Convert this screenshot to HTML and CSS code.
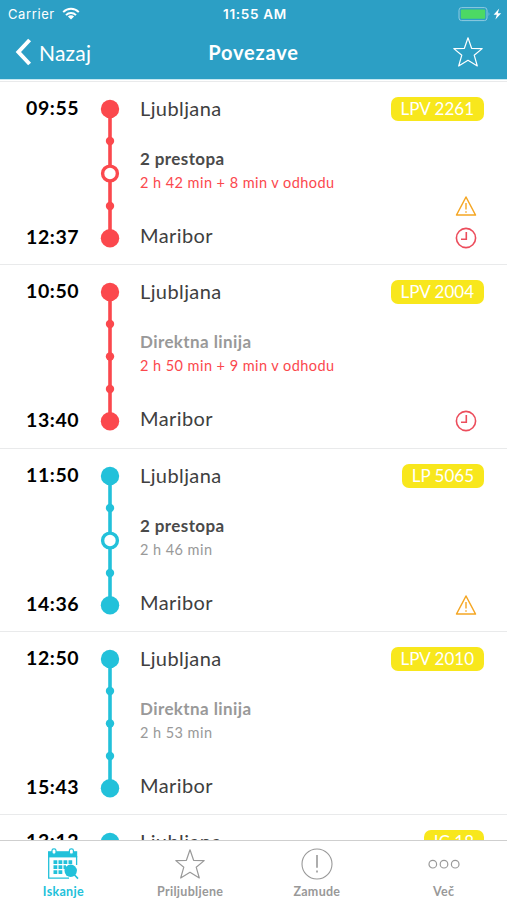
FILE: index.html
```html
<!DOCTYPE html>
<html lang="sl">
<head>
    <meta charset="UTF-8">
    <meta name="viewport" content="width=device-width, initial-scale=1.0">
    <title>Povezave</title>
    <link rel="stylesheet" href="styles.css">
</head>
<body>
    <!-- shared icons -->
    <svg class="sprite">
        <symbol id="star" viewBox="0 0 32 32">
            <path d="M16 1.8 L19.6 12.3 L30.2 12.6 L22.2 19.2 L25.3 30 L16 24.3 L6.7 30 L9.8 19.2 L1.8 12.6 L12.4 12.3 Z" fill="none" stroke="currentColor" stroke-width="1.2" stroke-linejoin="round"/>
        </symbol>
        <symbol id="warning" viewBox="0 0 22 22">
            <path d="M11 2 L20.5 20 H1.5 Z" fill="none" stroke="currentColor" stroke-width="1.5" stroke-linejoin="round"/>
            <path d="M11 8 V14.5 M11 16.2 V17.8" stroke="currentColor" stroke-width="1.4"/>
        </symbol>
        <symbol id="clock" viewBox="0 0 22 22">
            <circle cx="11" cy="11" r="9.6" fill="none" stroke="currentColor" stroke-width="1.6"/>
            <path d="M11.3 5 V12.3 H6" fill="none" stroke="currentColor" stroke-width="1.6"/>
        </symbol>
        <symbol id="track-direct" viewBox="0 0 20 150">
            <path d="M10 10 V139" stroke="currentColor" stroke-width="3.6"/>
            <g fill="currentColor">
                <circle cx="10" cy="10" r="9.2"/>
                <circle cx="10" cy="42" r="4.2"/>
                <circle cx="10" cy="74.5" r="4.2"/>
                <circle cx="10" cy="107" r="4.2"/>
                <circle cx="10" cy="139.3" r="9.2"/>
            </g>
        </symbol>
        <symbol id="track-transfer" viewBox="0 0 20 150">
            <path d="M10 10 V139" stroke="currentColor" stroke-width="3.6"/>
            <g fill="currentColor">
                <circle cx="10" cy="10" r="9.2"/>
                <circle cx="10" cy="42" r="4.2"/>
                <circle cx="10" cy="107" r="4.2"/>
                <circle cx="10" cy="139.3" r="9.2"/>
            </g>
            <circle cx="10" cy="74.5" r="7.4" fill="#fff" stroke="currentColor" stroke-width="3.4"/>
        </symbol>
    </svg>

    <header class="header">
        <div class="status-bar">
            <div class="carrier">
                <span>Carrier</span>
                <svg class="wifi" viewBox="0 0 18 13">
                    <g fill="none" stroke="currentColor" stroke-width="2">
                        <path d="M1.2 5.1 A11 11 0 0 1 16.8 5.1"/>
                        <path d="M4 8.1 A7 7 0 0 1 14 8.1"/>
                    </g>
                    <path d="M9 12.6 L5.9 9.6 A4.4 4.4 0 0 1 12.1 9.6 Z" fill="currentColor"/>
                </svg>
            </div>
            <span class="clock-time">11:55 AM</span>
            <svg class="battery" viewBox="0 0 44 16">
                <rect x="1" y="1.6" width="28" height="13" rx="2.6" fill="none" stroke="#8fcbe0" stroke-width="1"/>
                <rect x="2.8" y="3.4" width="24.4" height="9.4" rx="1" fill="#4cd964"/>
                <path d="M30.6 6 Q32.4 8.1 30.6 10.2 Z" fill="#8fcbe0"/>
                <path d="M41.2 2.6 L35.6 8.8 H38.8 L37.4 13.6 L43.2 7.2 H39.8 Z" fill="#fff"/>
            </svg>
        </div>
        <div class="nav-bar">
            <a class="back">
                <svg class="chevron" viewBox="0 0 17 28"><path d="M14.6 2 L3.4 14 L14.6 26" fill="none" stroke="currentColor" stroke-width="4"/></svg>
                <span>Nazaj</span>
            </a>
            <h1>Povezave</h1>
            <svg class="favorite"><use href="#star"/></svg>
        </div>
    </header>

    <main class="connections">
        <article class="connection delayed">
            <div class="times"><span>09:55</span><span>12:37</span></div>
            <svg class="track"><use href="#track-transfer"/></svg>
            <div class="route">
                <span class="station">Ljubljana</span>
                <strong class="transfers">2 prestopa</strong>
                <span class="duration">2 h 42 min + 8 min v odhodu</span>
                <span class="station">Maribor</span>
            </div>
            <div class="info">
                <span class="train">LPV 2261</span>
                <div class="alerts">
                    <svg class="warning"><use href="#warning"/></svg>
                    <svg class="late"><use href="#clock"/></svg>
                </div>
            </div>
        </article>

        <article class="connection delayed">
            <div class="times"><span>10:50</span><span>13:40</span></div>
            <svg class="track"><use href="#track-direct"/></svg>
            <div class="route">
                <span class="station">Ljubljana</span>
                <strong class="transfers direct">Direktna linija</strong>
                <span class="duration">2 h 50 min + 9 min v odhodu</span>
                <span class="station">Maribor</span>
            </div>
            <div class="info">
                <span class="train">LPV 2004</span>
                <div class="alerts">
                    <svg class="late"><use href="#clock"/></svg>
                </div>
            </div>
        </article>

        <article class="connection">
            <div class="times"><span>11:50</span><span>14:36</span></div>
            <svg class="track"><use href="#track-transfer"/></svg>
            <div class="route">
                <span class="station">Ljubljana</span>
                <strong class="transfers">2 prestopa</strong>
                <span class="duration">2 h 46 min</span>
                <span class="station">Maribor</span>
            </div>
            <div class="info">
                <span class="train">LP 5065</span>
                <div class="alerts">
                    <svg class="warning"><use href="#warning"/></svg>
                </div>
            </div>
        </article>

        <article class="connection">
            <div class="times"><span>12:50</span><span>15:43</span></div>
            <svg class="track"><use href="#track-direct"/></svg>
            <div class="route">
                <span class="station">Ljubljana</span>
                <strong class="transfers direct">Direktna linija</strong>
                <span class="duration">2 h 53 min</span>
                <span class="station">Maribor</span>
            </div>
            <div class="info">
                <span class="train">LPV 2010</span>
            </div>
        </article>

        <article class="connection">
            <div class="times"><span>13:12</span></div>
            <svg class="track"><use href="#track-direct"/></svg>
            <div class="route">
                <span class="station">Ljubljana</span>
            </div>
            <div class="info">
                <span class="train">IC 18</span>
            </div>
        </article>
    </main>

    <nav class="tab-bar">
        <a class="tab active">
            <svg viewBox="0 0 32 32">
                <path d="M1.7 8 V30.2 H22" fill="none" stroke="currentColor" stroke-width="1.3"/>
                <path d="M29.6 8 V17" stroke="currentColor" stroke-width="1.3"/>
                <path d="M1 3.2 H30.2 V9.4 H1 Z" fill="currentColor"/>
                <g fill="#fff" stroke="currentColor" stroke-width="1.2">
                    <rect x="5" y="0.8" width="4" height="5.4" rx="1.8"/>
                    <rect x="22.4" y="0.8" width="4" height="5.4" rx="1.8"/>
                </g>
                <path d="M6.5 14.2 H25.2 M6.5 19.2 H19 M6.5 24.2 H15.5" stroke="currentColor" stroke-width="3.8" stroke-dasharray="3.8 1.2"/>
                <circle cx="23.7" cy="22.8" r="6.2" fill="currentColor"/>
                <path d="M27.6 27 L31 30.6" stroke="currentColor" stroke-width="1.6"/>
            </svg>
            <span>Iskanje</span>
        </a>
        <a class="tab">
            <svg><use href="#star"/></svg>
            <span>Priljubljene</span>
        </a>
        <a class="tab">
            <svg viewBox="0 0 32 32">
                <circle cx="16" cy="16" r="15" fill="none" stroke="currentColor" stroke-width="1.1"/>
                <path d="M16 7 V19.8 M16 22.6 V24.4" stroke="currentColor" stroke-width="1.6"/>
            </svg>
            <span>Zamude</span>
        </a>
        <a class="tab">
            <svg viewBox="0 0 32 32">
                <g fill="none" stroke="currentColor" stroke-width="1.2">
                    <circle cx="4.8" cy="16.2" r="3.8"/>
                    <circle cx="16" cy="16.2" r="3.8"/>
                    <circle cx="27.2" cy="16.2" r="3.8"/>
                </g>
            </svg>
            <span>Več</span>
        </a>
    </nav>
</body>
</html>
```
FILE: styles.css
```css
body {
    display: flex;
    flex-direction: column;
    height: 900px;
    margin: 0;
    overflow: hidden;
    background-color: #fff;
    color: #404040;
    font-family: Lato, sans-serif;
}

.sprite {
    display: none;
}

/* header */
.header {
    flex: none;
    height: 79px;
    background-color: #2c9fc5;
    color: #fff;
    border-bottom: 1px solid #c5e8f1;
}

.status-bar {
    display: grid;
    grid-template-columns: 1fr auto 1fr;
    align-items: center;
    height: 27px;
    padding: 0 5px 0 8px;
    font-family: Inter, sans-serif;
    font-size: 13px;
}

.carrier {
    display: flex;
    align-items: center;
    gap: 7px;
    letter-spacing: 0.6px;
}

.wifi {
    width: 18px;
    height: 13px;
}

.clock-time {
    font-weight: 600;
    font-size: 13.5px;
    letter-spacing: 0.7px;
}

.battery {
    justify-self: end;
    width: 44px;
    height: 16px;
}

.nav-bar {
    display: grid;
    grid-template-columns: 1fr auto 1fr;
    align-items: center;
    height: 50px;
    padding: 0 15px;
}

.back {
    display: flex;
    align-items: center;
    gap: 7px;
    font-size: 21px;
    letter-spacing: 0.2px;
}

.chevron {
    width: 17px;
    height: 28px;
}

.nav-bar h1 {
    margin: 0;
    font-size: 20px;
    font-weight: 700;
    letter-spacing: 0.8px;
}

.favorite {
    justify-self: end;
    width: 32px;
    height: 32px;
    margin-right: 8px;
}

/* list of connections */
.connections {
    flex: 1;
    min-height: 0;
    padding-top: 1px;
    overflow: hidden;
}

.connection {
    display: grid;
    grid-template-columns: 74px 20px 1fr auto;
    box-sizing: border-box;
    height: 183.3px;
    padding: 14px 23px 0 26px;
    border-top: 1px solid #e9eaeb;
    color: #22c1da;
}

.connection.delayed {
    color: #fb484d;
}

.times {
    display: flex;
    flex-direction: column;
    justify-content: space-between;
    height: 153px;
    color: #000;
    font-size: 19.5px;
    font-weight: 700;
    line-height: 24px;
    letter-spacing: 0.6px;
}

.track {
    width: 20px;
    height: 150px;
    margin-top: 3px;
}

.route {
    display: flex;
    flex-direction: column;
    padding-left: 20px;
}

.station {
    color: #404040;
    font-size: 20px;
    line-height: 24px;
    letter-spacing: 0.4px;
}

.transfers {
    margin-top: 27px;
    color: #4a4a4a;
    font-size: 17px;
    line-height: 24px;
    letter-spacing: 0.4px;
}

.transfers.direct {
    color: #999;
}

.duration {
    color: #999;
    font-size: 14.5px;
    line-height: 23px;
    letter-spacing: 0.45px;
}

.delayed .duration {
    color: #fb484d;
}

.duration + .station {
    margin-top: 29px;
}

.info {
    display: flex;
    flex-direction: column;
    align-items: flex-end;
    justify-content: space-between;
    height: 153px;
}

.train {
    margin-top: 1px;
    padding: 0 10px;
    border-radius: 7px;
    background-color: #f8e71c;
    color: #fff;
    font-size: 17px;
    line-height: 24px;
}

.alerts {
    display: flex;
    flex-direction: column;
    gap: 10px;
    margin-right: 7px;
}

.alerts svg {
    width: 22px;
    height: 22px;
}

.warning {
    color: #f5a623;
}

.late {
    color: #ec4d5c;
}

/* bottom tabs */
.tab-bar {
    display: grid;
    grid-template-columns: repeat(4, 1fr);
    flex: none;
    height: 59px;
    border-top: 1px solid #cfcfcf;
    background-color: #fff;
}

.tab {
    display: flex;
    flex-direction: column;
    align-items: center;
    padding-top: 7px;
    color: #999;
    font-size: 12.5px;
    font-weight: 700;
    line-height: 16px;
    letter-spacing: 0.3px;
}

.tab svg {
    width: 32px;
    height: 32px;
    margin-bottom: 4px;
}

.tab.active {
    color: #22c1da;
}
```
